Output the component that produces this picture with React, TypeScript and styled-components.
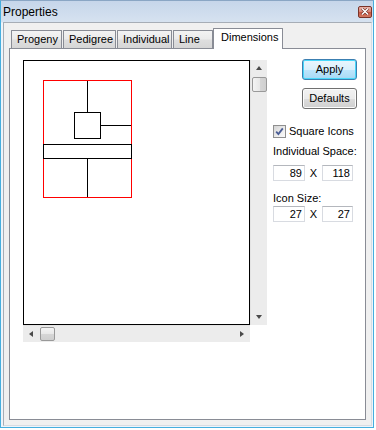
import React from 'react'
import styled, { createGlobalStyle } from 'styled-components'

const GlobalStyle = createGlobalStyle`
  html, body {
    margin: 0;
    padding: 0;
    background: #fff;
  }
  body {
    font-family: "Liberation Sans", Arial, sans-serif;
    font-size: 11px;
    color: #000;
  }
  * { box-sizing: border-box; }
`

const tabs = [
  { label: 'Progeny', width: 51 },
  { label: 'Pedigree', width: 53 },
  { label: 'Individual', width: 55 },
  { label: 'Line', width: 40 },
  { label: 'Dimensions', width: 70, active: true },
]

export default function App() {
  return (
    <>
      <GlobalStyle />
      <Frame>
        <TitleBar>
          <Title>Properties</Title>
          <CloseButton>
            <svg width="8" height="7" viewBox="0 0 8 7">
              <path d="M1 0.5 L7 6.5 M7 0.5 L1 6.5" stroke="#6b2a20" strokeWidth="2.6" />
              <path d="M1 0.5 L7 6.5 M7 0.5 L1 6.5" stroke="#fff" strokeWidth="1.5" />
            </svg>
          </CloseButton>
        </TitleBar>
        <Client>
          <TabRow>
            {tabs.map((t) => (
              <Tab key={t.label} $width={t.width} $active={!!t.active}>
                {t.label}
              </Tab>
            ))}
          </TabRow>
          <Panel>
            <ScrollView>
              <Canvas>
                <svg width="225" height="263" shapeRendering="crispEdges">
                  <g fill="none" stroke="#000" strokeWidth="1">
                    <line x1="63.5" y1="19" x2="63.5" y2="51" />
                    <rect x="50.5" y="51.5" width="26" height="26" />
                    <line x1="77" y1="64.5" x2="107" y2="64.5" />
                    <line x1="63.5" y1="97" x2="63.5" y2="136" />
                  </g>
                  <rect x="19.5" y="19.5" width="88" height="117" fill="none" stroke="#f00" />
                  <rect x="19.5" y="83.5" width="88" height="14" fill="none" stroke="#000" />
                </svg>
              </Canvas>
              <VScroll>
                <ScrollButton>
                  <Arrow $dir="up" />
                </ScrollButton>
                <VThumb />
                <Spacer />
                <ScrollButton>
                  <Arrow $dir="down" />
                </ScrollButton>
              </VScroll>
              <HScroll>
                <ScrollButton>
                  <Arrow $dir="left" />
                </ScrollButton>
                <HThumb />
                <Spacer />
                <ScrollButton>
                  <Arrow $dir="right" />
                </ScrollButton>
              </HScroll>
              <Corner />
            </ScrollView>
            <SideColumn>
              <PushButton $primary>Apply</PushButton>
              <PushButton style={{ marginTop: 8 }}>Defaults</PushButton>
              <CheckRow>
                <CheckBox>
                  <svg width="11" height="11" viewBox="0 0 11 11">
                    <path d="M2.2 5.6 L4.4 8 L8.8 2.4" fill="none" stroke="#4a5d95" strokeWidth="1.8" />
                  </svg>
                </CheckBox>
                <span>Square Icons</span>
              </CheckRow>
              <FieldLabel $gap={6}>Individual Space:</FieldLabel>
              <InputRow $gap={6}>
                <NumberBox>89</NumberBox>
                <Times>X</Times>
                <NumberBox>118</NumberBox>
              </InputRow>
              <FieldLabel $gap={10}>Icon Size:</FieldLabel>
              <InputRow $gap={0}>
                <NumberBox>27</NumberBox>
                <Times>X</Times>
                <NumberBox>27</NumberBox>
              </InputRow>
            </SideColumn>
          </Panel>
        </Client>
      </Frame>
    </>
  )
}

const Frame = styled.div`
  width: 374px;
  height: 428px;
  display: flex;
  flex-direction: column;
  border: 1px solid #46aede;
  border-top-color: #8aa6c4;
  background: linear-gradient(to bottom, #c6d6ea 0, #d6e2f0 21px, #eef4fa 22px, #eef4fa 100%);
`

const TitleBar = styled.div`
  height: 21px;
  display: flex;
  align-items: center;
  justify-content: space-between;
  padding: 0 1px 0 2px;
`

const Title = styled.span`
  font-size: 12px;
  color: #000;
  line-height: 14px;
  padding-top: 1px;
`

const CloseButton = styled.div`
  width: 14px;
  height: 12px;
  border: 1px solid #7a3328;
  border-radius: 2px;
  background: linear-gradient(to bottom, #eab3aa 0%, #d98576 45%, #c85744 55%, #d27a63 100%);
  display: flex;
  align-items: center;
  justify-content: center;
`

const Client = styled.div`
  flex: 1;
  margin: 0 1px 1px 2px;
  border: 1px solid #a6adb6;
  border-right-color: #d7dce2;
  border-bottom-color: #d7dce2;
  background: #f0f0f0;
  padding: 5px;
  display: flex;
  flex-direction: column;
`

const TabRow = styled.div`
  height: 20px;
  display: flex;
  align-items: flex-end;
  padding-left: 2px;
  position: relative;
  z-index: 1;
`

const Tab = styled.div<{ $width: number; $active: boolean }>`
  width: ${(p) => p.$width}px;
  height: ${(p) => (p.$active ? 21 : 18)}px;
  margin-right: ${(p) => (p.$active ? 0 : 1)}px;
  margin-left: ${(p) => (p.$active ? -1 : 0)}px;
  margin-bottom: ${(p) => (p.$active ? -1 : 0)}px;
  border: 1px solid #898c95;
  border-bottom: none;
  border-radius: 1px 1px 0 0;
  background: ${(p) =>
    p.$active ? '#fff' : 'linear-gradient(to bottom, #f3f3f3 0%, #ebebeb 45%, #dedede 55%, #d6d6d6 100%)'};
  padding: 1px 0 0 ${(p) => (p.$active ? 7 : 5)}px;
  line-height: 15px;
  white-space: nowrap;
  color: #000;
`

const Panel = styled.div`
  flex: 1;
  border: 1px solid #898c95;
  background: #fff;
  display: flex;
  align-items: flex-start;
  padding: 10px 8px 0 13px;
`

const ScrollView = styled.div`
  margin-top: 1px;
  display: grid;
  grid-template-columns: 227px 17px;
  grid-template-rows: 265px 17px;
`

const Canvas = styled.div`
  border: 1px solid #000;
  background: #fff;
  overflow: hidden;

  svg {
    display: block;
  }
`

const VScroll = styled.div`
  display: flex;
  flex-direction: column;
  align-items: center;
  background: #ececec;
  border-left: 1px solid #e3e3e3;
`

const HScroll = styled.div`
  display: flex;
  align-items: center;
  background: #ececec;
  border-top: 1px solid #e3e3e3;
`

const Corner = styled.div`
  background: #fff;
`

const Spacer = styled.div`
  flex: 1;
`

const ScrollButton = styled.div`
  width: 16px;
  height: 16px;
  flex: none;
  display: flex;
  align-items: center;
  justify-content: center;
`

const Arrow = styled.div<{ $dir: 'up' | 'down' | 'left' | 'right' }>`
  width: 0;
  height: 0;
  border: 4px solid transparent;
  ${(p) =>
    p.$dir === 'up'
      ? 'border-bottom-color: #4a4a4a; border-top-width: 0; border-left-width: 3.5px; border-right-width: 3.5px;'
      : p.$dir === 'down'
      ? 'border-top-color: #4a4a4a; border-bottom-width: 0; border-left-width: 3.5px; border-right-width: 3.5px;'
      : p.$dir === 'left'
      ? 'border-right-color: #4a4a4a; border-left-width: 0; border-top-width: 3.5px; border-bottom-width: 3.5px;'
      : 'border-left-color: #4a4a4a; border-right-width: 0; border-top-width: 3.5px; border-bottom-width: 3.5px;'}
`

const VThumb = styled.div`
  width: 15px;
  height: 15px;
  margin-top: 1px;
  border: 1px solid #999;
  border-radius: 2px;
  background: linear-gradient(to right, #f4f4f4 0%, #e8e8e8 50%, #d6d6d6 51%, #cfcfcf 100%);
`

const HThumb = styled.div`
  width: 15px;
  height: 14px;
  margin-left: 1px;
  border: 1px solid #999;
  border-radius: 2px;
  background: linear-gradient(to bottom, #f4f4f4 0%, #e8e8e8 50%, #d6d6d6 51%, #cfcfcf 100%);
`

const SideColumn = styled.div`
  width: 84px;
  margin-left: 6px;
  display: flex;
  flex-direction: column;
`

const PushButton = styled.div<{ $primary?: boolean }>`
  align-self: flex-end;
  width: 55px;
  height: 21px;
  border-radius: 3px;
  border: 1px solid ${(p) => (p.$primary ? '#3c7fb1' : '#707070')};
  box-shadow: inset 0 0 0 1px ${(p) => (p.$primary ? '#48d8fb' : '#fcfcfc')};
  background: ${(p) =>
    p.$primary
      ? 'linear-gradient(to bottom, #eaf6fd 0%, #d9f0fc 50%, #bee6fd 51%, #a7d9f5 100%)'
      : 'linear-gradient(to bottom, #f2f2f2 0%, #ebebeb 50%, #dddddd 51%, #cfcfcf 100%)'};
  display: flex;
  align-items: center;
  justify-content: center;
  font-size: 11px;
  line-height: 13px;
  color: #000;
`

const CheckRow = styled.div`
  margin-top: 16px;
  height: 13px;
  display: flex;
  align-items: center;
  gap: 3px;
  line-height: 13px;
`

const CheckBox = styled.div`
  width: 13px;
  height: 13px;
  flex: none;
  border: 1px solid #8f8f8f;
  background: linear-gradient(135deg, #d4d4d4 0%, #eeeeee 60%, #fafafa 100%);
  display: flex;
  align-items: center;
  justify-content: center;
`

const FieldLabel = styled.div<{ $gap: number }>`
  margin-top: ${(p) => p.$gap}px;
  line-height: 15px;
  white-space: nowrap;
`

const InputRow = styled.div<{ $gap: number }>`
  margin-top: ${(p) => p.$gap}px;
  display: grid;
  grid-template-columns: 32px 17px 31px;
  align-items: center;
`

const NumberBox = styled.div`
  height: 16px;
  border: 1px solid #d8dbe1;
  border-top-color: #b4b7bd;
  background: #fff;
  text-align: right;
  padding-right: 2px;
  line-height: 14px;
  font-size: 11px;
`

const Times = styled.div`
  text-align: center;
  line-height: 14px;
`
